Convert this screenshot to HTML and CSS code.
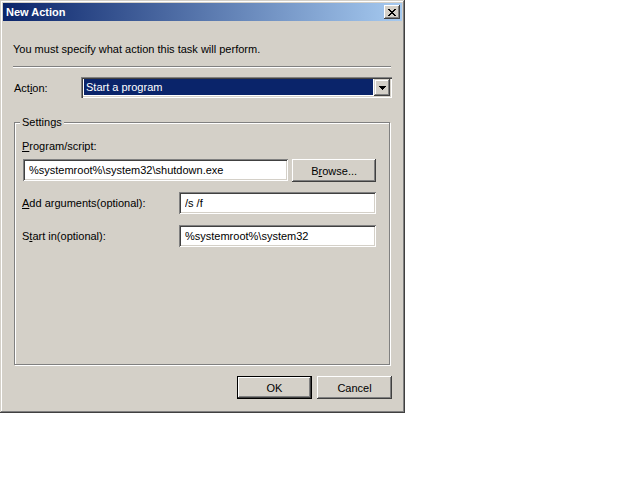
FILE: index.html
```html
<!DOCTYPE html>
<html lang="en">
<head>
  <meta charset="UTF-8">
  <meta name="viewport" content="width=device-width, initial-scale=1.0">
  <title>New Action</title>
  <link rel="stylesheet" href="styles.css">
</head>
<body>
  <div class="window">
    <div class="title-bar">
      <span class="title">New Action</span>
      <button class="close-button" title="Close">
        <svg width="8" height="7" viewBox="0 0 8 7" shape-rendering="crispEdges">
          <path fill="#000" d="M0 0h2v1H0zM6 0h2v1H6zM1 1h2v1H1zM5 1h2v1H5zM2 2h4v1H2zM3 3h2v1H3zM2 4h4v1H2zM1 5h2v1H1zM5 5h2v1H5zM0 6h2v1H0zM6 6h2v1H6z"/>
        </svg>
      </button>
    </div>

    <div class="content">
      <p class="intro">You must specify what action this task will perform.</p>
      <div class="separator"></div>

      <div class="action-row">
        <label class="action-label">Act<u>i</u>on:</label>
        <div class="combo">
          <div class="combo-value">Start a program</div>
          <div class="combo-button">
            <svg width="7" height="4" viewBox="0 0 7 4" shape-rendering="crispEdges">
              <path fill="#000" d="M0 0h7v1H0zM1 1h5v1H1zM2 2h3v1H2zM3 3h1v1H3z"/>
            </svg>
          </div>
        </div>
      </div>

      <div class="group">
        <span class="legend">Settings</span>
        <label class="field-label"><u>P</u>rogram/script:</label>
        <div class="program-row">
          <input class="textbox program-box" type="text" value="%systemroot%\system32\shutdown.exe">
          <button class="button browse-button">B<u>r</u>owse...</button>
        </div>
        <div class="field-row args-row">
          <label class="field-label inline"><u>A</u>dd arguments(optional):</label>
          <input class="textbox short-box" type="text" value="/s /f">
        </div>
        <div class="field-row start-row">
          <label class="field-label inline">S<u>t</u>art in(optional):</label>
          <input class="textbox short-box" type="text" value="%systemroot%\system32">
        </div>
      </div>

      <div class="dialog-buttons">
        <button class="button default-button">OK</button>
        <button class="button">Cancel</button>
      </div>
    </div>
  </div>
</body>
</html>
```

FILE: styles.css
```css
body {
  margin: 0;
  padding: 0;
  background-color: #fff;
  font-family: "Liberation Sans", Arial, sans-serif;
  font-size: 11px;
  color: #000;
}
u {
  text-decoration: underline;
  text-underline-offset: 1px;
}
.window {
  width: 405px;
  height: 413px;
  box-sizing: border-box;
  padding: 3px;
  background-color: #d4d0c8;
  box-shadow: inset -1px -1px #404040, inset 1px 1px #d4d0c8, inset -2px -2px #808080, inset 2px 2px #fff;
  display: flex;
  flex-direction: column;
}
.title-bar {
  height: 18px;
  padding: 0 2px 0 3px;
  background: linear-gradient(to right, #0a246a, #a6caf0);
  display: flex;
  align-items: center;
  justify-content: space-between;
}
.title {
  color: #fff;
  font-weight: bold;
  line-height: 13px;
}
.close-button {
  width: 16px;
  height: 14px;
  padding: 0;
  border: none;
  background-color: #d4d0c8;
  box-shadow: inset -1px -1px #404040, inset 1px 1px #fff, inset -2px -2px #808080;
  display: flex;
  align-items: center;
  justify-content: center;
}
.close-button svg {
  margin-left: -1px;
}
.content {
  flex: 1;
  padding: 0 10px;
  display: flex;
  flex-direction: column;
}
.intro {
  margin: 22px 0 0 0;
  line-height: 13px;
}
.separator {
  width: 378px;
  margin-top: 10px;
  border-top: 1px solid #808080;
  border-bottom: 1px solid #fff;
}
.action-row {
  margin-top: 9px;
  display: flex;
  align-items: center;
}
.action-label {
  width: 68px;
  padding-left: 1px;
  box-sizing: border-box;
}
.combo {
  width: 311px;
  height: 21px;
  box-sizing: border-box;
  padding: 2px;
  background-color: #fff;
  box-shadow: inset 1px 1px #808080, inset 2px 2px #404040, inset -1px -1px #fff, inset -2px -2px #d4d0c8;
  display: flex;
}
.combo-value {
  flex: 1;
  margin: 0 1px 1px 1px;
  padding-left: 2px;
  background-color: #0a246a;
  color: #fff;
  line-height: 17px;
}
.combo-button {
  width: 16px;
  background-color: #d4d0c8;
  box-shadow: inset -1px -1px #404040, inset 1px 1px #d4d0c8, inset -2px -2px #808080, inset 2px 2px #fff;
  display: flex;
  align-items: center;
  justify-content: center;
}
.group {
  position: relative;
  width: 376px;
  height: 243px;
  box-sizing: border-box;
  margin: 24px 0 0 1px;
  padding: 17px 13px 0 7px;
  border: 1px solid #808080;
  box-shadow: inset 1px 1px #fff, 1px 1px #fff;
}
.legend {
  position: absolute;
  top: -7px;
  left: 5px;
  padding: 0 2px;
  background-color: #d4d0c8;
  line-height: 13px;
}
.field-label {
  display: block;
  line-height: 13px;
}
.field-label.inline {
  width: 157px;
  flex-shrink: 0;
}
.program-row {
  margin-top: 6px;
  display: flex;
  gap: 4px;
}
.textbox {
  height: 22px;
  box-sizing: border-box;
  margin: 0;
  padding: 0 0 0 6px;
  border: none;
  outline: none;
  background-color: #fff;
  font-family: "Liberation Sans", Arial, sans-serif;
  font-size: 11px;
  color: #000;
  box-shadow: inset 1px 1px #808080, inset -1px -1px #fff, inset 2px 2px #404040, inset -2px -2px #d4d0c8;
}
.program-box {
  width: 266px;
  margin-left: 1px;
}
.short-box {
  width: 198px;
}
.field-row {
  display: flex;
  align-items: center;
}
.args-row {
  margin-top: 10px;
}
.start-row {
  margin-top: 11px;
}
.button {
  width: 75px;
  height: 23px;
  padding: 0;
  border: none;
  background-color: #d4d0c8;
  font-family: "Liberation Sans", Arial, sans-serif;
  font-size: 11px;
  color: #000;
  box-shadow: inset -1px -1px #404040, inset 1px 1px #fff, inset -2px -2px #808080, inset 2px 2px #d4d0c8;
}
.browse-button {
  width: 84px;
  height: 23px;
}
.default-button {
  border: 1px solid #000;
}
.dialog-buttons {
  margin-top: 11px;
  display: flex;
  justify-content: flex-end;
  gap: 5px;
}
```
